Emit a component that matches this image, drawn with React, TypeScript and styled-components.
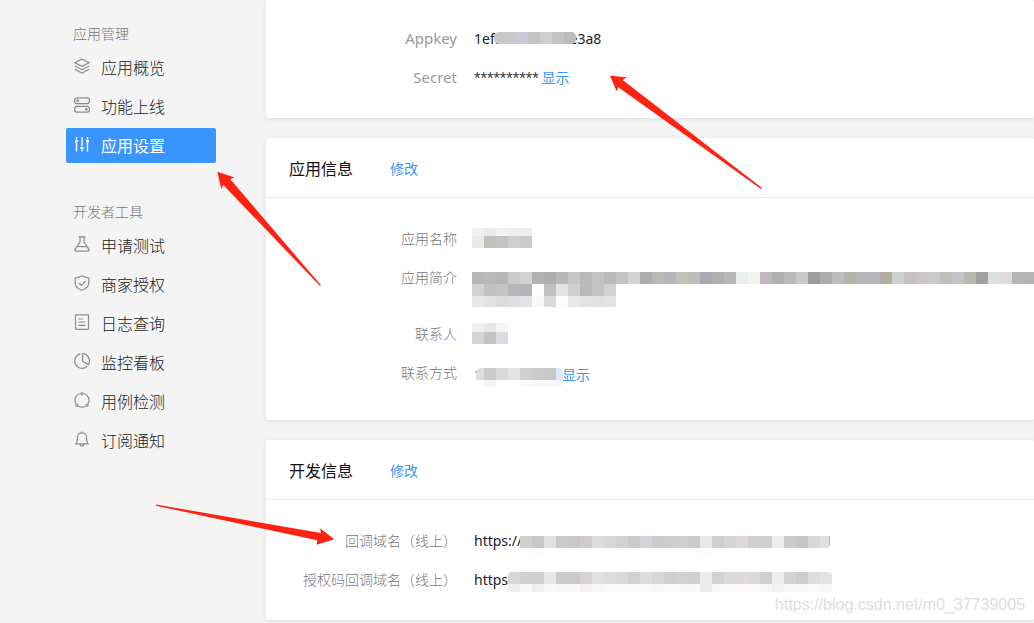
import React from 'react';
import styled, { createGlobalStyle } from 'styled-components';

const GlobalStyle = createGlobalStyle`
  *, *::before, *::after { box-sizing: border-box; }
  body {
    margin: 0;
    background: #f4f4f4;
    color: #222;
    font-family: "Noto Sans", "Noto Sans CJK SC", sans-serif;
    font-size: 14px;
  }
`;

const Page = styled.div`
  position: relative;
  display: flex;
  min-height: 100vh;
  overflow: hidden;
`;

const Sidebar = styled.nav`
  flex: none;
  width: 266px;
  padding: 24px 50px 0 66px;
`;

const NavGroup = styled.section`
  margin-bottom: 39px;
`;

const NavTitle = styled.h2`
  margin: 0 0 6px;
  padding-left: 7px;
  font-size: 14px;
  font-weight: 300;
  line-height: 20px;
  color: #777;
`;

const NavList = styled.ul`
  display: flex;
  flex-direction: column;
  gap: 4px;
  margin: 0;
  padding: 0;
  list-style: none;
`;

const NavLink = styled.a<{ $active?: boolean }>`
  display: flex;
  gap: 11px;
  height: 35px;
  padding: 8px 8px 0;
  border-radius: 2px;
  font-family: "Noto Sans CJK SC", sans-serif;
  font-size: 16px;
  font-weight: ${(p) => (p.$active ? 400 : 300)};
  line-height: 18px;
  text-decoration: none;
  color: ${(p) => (p.$active ? '#fff' : '#222')};
  background: ${(p) => (p.$active ? '#3a94ff' : 'transparent')};

  svg {
    flex: none;
    color: ${(p) => (p.$active ? '#fff' : '#8c8c8c')};
  }
`;

const Main = styled.main`
  flex: 1;
  min-width: 0;
  display: flex;
  flex-direction: column;
  gap: 20px;
`;

const Card = styled.section`
  background: #fff;
  border-radius: 2px;
  box-shadow: 0 1px 4px rgba(0, 0, 0, 0.1);
`;

const CardHeader = styled.header`
  display: flex;
  align-items: center;
  gap: 37px;
  height: 60px;
  padding: 0 23px;
  border-bottom: 1px solid #e9e9e9;
`;

const CardTitle = styled.h3`
  margin: 0;
  font-family: "Noto Sans CJK SC", sans-serif;
  font-size: 16px;
  font-weight: 400;
  line-height: 24px;
  color: #111;
`;

const Fields = styled.dl<{ $top: number; $bottom: number }>`
  margin: 0;
  padding: ${(p) => p.$top}px 0 ${(p) => p.$bottom}px;
`;

const Field = styled.div<{ $tall?: boolean }>`
  display: flex;
  gap: 15px;
  height: ${(p) => (p.$tall ? 56 : 39)}px;
  line-height: 37px;
`;

const Label = styled.dt<{ $latin?: boolean }>`
  flex: none;
  width: 191px;
  text-align: right;
  font-size: ${(p) => (p.$latin ? 15 : 14)}px;
  font-weight: ${(p) => (p.$latin ? 400 : 300)};
  color: ${(p) => (p.$latin ? '#999' : '#777')};
`;

const Value = styled.dd<{ $low?: boolean }>`
  position: relative;
  flex: 1;
  min-width: 0;
  margin: 0;
  padding-left: 2px;
  line-height: ${(p) => (p.$low ? 41 : 37)}px;
  white-space: nowrap;
`;

const Stars = styled.span`
  margin-right: 3px;
  font-family: Roboto, sans-serif;
  font-size: 15px;
  color: #444;
`;

const ActionLink = styled.a<{ $indent?: number }>`
  margin-left: ${(p) => p.$indent ?? 0}px;
  font-family: "Noto Sans CJK SC", sans-serif;
  font-size: 14px;
  text-decoration: none;
  color: #3a94ff;
`;

const Tail = styled.span<{ $gap: number }>`
  margin-left: ${(p) => p.$gap}px;
`;

const MosaicLayer = styled.svg<{ $left: number; $top: number }>`
  position: absolute;
  left: ${(p) => p.$left}px;
  top: ${(p) => p.$top}px;
  display: block;
`;

const Arrows = styled.svg`
  position: absolute;
  left: 0;
  top: 0;
  pointer-events: none;
`;

const Watermark = styled.span`
  position: absolute;
  right: 9px;
  bottom: 8px;
  font-family: "Liberation Sans", sans-serif;
  font-size: 16px;
  line-height: 20px;
  color: #dedede;
`;

type MosaicRow = { height: number; cells: string };

/* Pixelated cover for private values: one row per string, one colour per 12px cell. */
function Mosaic({ left, top, rows, radius = 0, start = 0, end }: {
  left: number; top: number; rows: MosaicRow[]; radius?: number; start?: number; end?: number;
}) {
  const id = React.useId();
  const grid = rows.map((r) => r.cells.split(' '));
  const width = Math.max(...grid.map((g) => g.length)) * 12;
  const height = rows.reduce((sum, r) => sum + r.height, 0);
  let y = 0;
  return (
    <MosaicLayer $left={left} $top={top} width={width} height={height} shapeRendering="crispEdges" aria-hidden="true">
      <clipPath id={id}>
        <rect x={start} y={0} width={(end ?? width) - start} height={height} rx={radius} />
      </clipPath>
      <g clipPath={`url(#${id})`}>
        {rows.map((row, r) => {
          const rowY = y;
          y += row.height;
          return grid[r].map((c, i) =>
            c === '-' ? null : <rect key={`${r}-${i}`} x={i * 12} y={rowY} width={12} height={row.height} fill={`#${c}`} />
          );
        })}
      </g>
    </MosaicLayer>
  );
}

const appkeyRows = [{ height: 12, cells: 'c6c6c5 c8c8c8 c8c9d3 c3c3c1 cfcfd1 c5c4c3 bcbbbb d5d5d6' }];
const nameRows = [
  { height: 8, cells: 'f1f0f0 ebe9ea f0f1f3 efeeee efeeee' },
  { height: 12, cells: 'eae9e8 c1c0bb c0c4c6 d1cdcc c9cad0' },
];
const introRows = [
  {
    height: 12,
    cells:
      'b9b6b6 bbb8b9 b3b8b7 cbc9cb d2d3d0 aeb3b5 adaeaf b9b8b8 c5c7c6 b7bab7 c2c3c3 babbb9 c1c5c7 d5d3d1 ' +
      'adadab b9b9b8 b3b5ba bfc3bb bebfbd a9a9b3 b0b0ae b9b7b8 e9eeee f3f4f0 bfb9bf afafad b8babb c8c8c6 ' +
      '9d9d9c adacad bdbdbd b4b4ae b9b7b8 b7b6be b3aca2 cdd1d3 c5c1c2 cbc6c3 c8cbcb c1bfbe c2c6ca b9b9b4 ' +
      'a19f9f dde0e2 dddcd8 b5b5b5 b6b3b7',
  },
  { height: 12, cells: 'd2d2d3 c0c2bf c3c5c4 b8b7b8 b1b6b8 fefefd c4bfbf e2e4e7 d2d0cf bab9be c4c4c4 cfd3d4' },
  { height: 11, cells: 'e7e7e5 e1e3e2 dddbdd dddee1 e2e4e4 f9f9f9 dad8d9 fafcfe e9e8e7 e4e4e4 e0e2e1 e3e5e5' },
];
const contactRows = [
  { height: 9, cells: 'f0f0f0 e6e6e6 f3f4f6' },
  { height: 12, cells: 'd5d5d4 c3c2c2 d9dde1' },
];
const phoneRows = [
  { height: 12, cells: 'deddd9 c7c9cb d8d9d9 e2e4e3 cfcfd1 cbc9ca c8c8c9 dce8fe' },
  { height: 7, cells: '- f5f5f5 - - fafafb f7f8fa f8f8f8 f5f8fe' },
];
const callbackRows = [
  {
    height: 12,
    cells:
      'd0d1cf c8c7c7 dfe1e5 cdcacc c6c8c5 d3cbc9 dadddd d7d7d6 d2d2cf c9c9c7 d4d5da cccccb cbcecd cecfcc c8cacd ' +
      'e8e8e6 d0cecd d5d7d5 dfdad8 cecfd2 d0cfce ececec cbcbcc c6c6c6 d6d7da dfe1e1',
  },
  { height: 7, cells: '- fcfcfc - - - - - - - - - - - - - fcfcfc' },
];
const authRows = [
  {
    height: 12,
    cells:
      'd7d8d6 d0d1d0 d4cfcf e4e8e9 cdcacc c9cbc8 d8d3d1 dee2e2 dedddb d9d9d9 d2d2d0 dcdde0 d9d7d6 ced0cf d1d2d1 d0d0d3 ' +
      'ecebea d3d2d0 dadcdb dfdad8 d7d9dc d0cfce eeeeee d3d3d3 cdcdcb dcdde0 e2e4e4',
  },
  {
    height: 8,
    cells:
      'ededee f9f9f9 efefef f8f8f8 f6f6f7 f8f8f8 f1f1f1 f6f6f6 fafafa fafaf8 fafafa fafafa f6f6f6 fafafa f9f9f9 f9f9f9 ' +
      'ecebea f9f9f9 fafafa fafafa fafafa f7f7f7 f1f1f1 f8f8f8 f7f9f8 fafafa f8f8f8',
  },
];

const icons: Record<string, React.ReactNode> = {
  layers: (
    <>
      <path d="M8 1 15.2 4.7 8 8.4.8 4.7Z" />
      <path d="M.8 8 8 11.7 15.2 8" />
      <path d="M.8 11.3 8 15l7.2-3.7" />
    </>
  ),
  toggles: (
    <>
      <rect x=".6" y=".8" width="14.8" height="5.8" rx="2.4" />
      <rect x=".6" y="9.4" width="14.8" height="5.8" rx="2.4" />
      <circle cx="3.7" cy="3.7" r=".8" fill="currentColor" />
      <circle cx="12.3" cy="12.3" r=".8" fill="currentColor" />
    </>
  ),
  sliders: (
    <>
      <path d="M2.5 1v2.500M2.500 7v8.500M8 1v9M8 13.500v2M13.500 1v2.500M13.500 7v8.500" strokeWidth="1.4" />
      <path d="M1 5.300h3M6.500 12h3M12 5.300h3" strokeWidth="2.6" />
    </>
  ),
  flask: (
    <>
      <path d="M4.600.9h6.800M6 1v5L.9 13.600q-.5 1.600 1 1.600h12.200q1.500 0 1-1.600L10 6V1" />
      <path d="M3.600 10.600h8.800" />
    </>
  ),
  shield: (
    <>
      <path d="M8 .8Q4.700 3 1.200 3v4.600C1.200 11.500 4 14 8 15.300c4-1.300 6.800-3.800 6.800-7.700V3Q11.300 3 8 .8Z" />
      <path d="m4.800 7.800 2.500 2.500 4.300-4.300" />
    </>
  ),
  log: (
    <>
      <rect x="1.500" y=".8" width="13" height="14.500" rx=".5" />
      <path d="M4.300 5h4.500M4.300 8h7M4.300 11.300h7" />
    </>
  ),
  pie: (
    <>
      <path d="M8.600.700A7.400 7.400 0 0 1 14.400 11.800L8.600 8.300Z" />
      <path d="M6.400.9A7.300 7.300 0 1 0 13.200 13.200" />
    </>
  ),
  cycle: (
    <>
      <path d="M5.700 1.500A7 7 0 0 0 2 11.700M10.300 1.500A7 7 0 0 1 14 11.700M4.500 14.200a7 7 0 0 0 7 0" />
      <circle cx="8" cy="1.700" r="1.100" />
      <circle cx="3" cy="13.200" r="1.100" />
      <circle cx="13" cy="13.200" r="1.100" />
    </>
  ),
  bell: (
    <>
      <path d="M8 .4v1.400M1.800 12.800h12.400Q12.600 11 12.600 8.600V6.500C12.600 3.500 10.600 1.900 8 1.900S3.400 3.500 3.400 6.500v2.100Q3.400 11 1.800 12.800Z" />
      <path d="M6 13.200q.3 1.900 2 1.900t2-1.900" />
    </>
  ),
};

function Icon({ name }: { name: string }) {
  return (
    <svg width="16" height="16" viewBox="0 0 16 16" fill="none" stroke="currentColor" strokeWidth="1.2" aria-hidden="true">
      {icons[name]}
    </svg>
  );
}

const groups = [
  {
    title: '应用管理',
    items: [
      { icon: 'layers', text: '应用概览' },
      { icon: 'toggles', text: '功能上线' },
      { icon: 'sliders', text: '应用设置', active: true },
    ],
  },
  {
    title: '开发者工具',
    items: [
      { icon: 'flask', text: '申请测试' },
      { icon: 'shield', text: '商家授权' },
      { icon: 'log', text: '日志查询' },
      { icon: 'pie', text: '监控看板' },
      { icon: 'cycle', text: '用例检测' },
      { icon: 'bell', text: '订阅通知' },
    ],
  },
];

export default function App() {
  return (
    <>
      <GlobalStyle />
      <Page>
        <Sidebar>
          {groups.map((group) => (
            <NavGroup key={group.title}>
              <NavTitle>{group.title}</NavTitle>
              <NavList>
                {group.items.map((item) => (
                  <li key={item.text}>
                    <NavLink href="#" $active={'active' in item}>
                      <Icon name={item.icon} />
                      {item.text}
                    </NavLink>
                  </li>
                ))}
              </NavList>
            </NavGroup>
          ))}
        </Sidebar>

        <Main>
          <Card>
            <Fields $top={20} $bottom={20}>
              <Field>
                <Label $latin>Appkey</Label>
                <Value>
                  1eff<Tail $gap={70}>e3a8</Tail>
                  <Mosaic left={20} top={12} rows={appkeyRows} radius={5} start={2} end={84} />
                </Value>
              </Field>
              <Field>
                <Label $latin>Secret</Label>
                <Value>
                  <Stars>**********</Stars>
                  <ActionLink href="#">显示</ActionLink>
                </Value>
              </Field>
            </Fields>
          </Card>

          <Card>
            <CardHeader>
              <CardTitle>应用信息</CardTitle>
              <ActionLink href="#">修改</ActionLink>
            </CardHeader>
            <Fields $top={22} $bottom={27}>
              <Field>
                <Label>应用名称</Label>
                <Value><Mosaic left={0} top={8} rows={nameRows} /></Value>
              </Field>
              <Field $tall>
                <Label>应用简介</Label>
                <Value><Mosaic left={0} top={13} rows={introRows} /></Value>
              </Field>
              <Field>
                <Label>联系人</Label>
                <Value><Mosaic left={0} top={8} rows={contactRows} /></Value>
              </Field>
              <Field>
                <Label>联系方式</Label>
                <Value $low>
                  1<ActionLink href="#" $indent={80}>显示</ActionLink>
                  <Mosaic left={0} top={14} rows={phoneRows} radius={5} start={4} end={91} />
                </Value>
              </Field>
            </Fields>
          </Card>

          <Card>
            <CardHeader>
              <CardTitle>开发信息</CardTitle>
              <ActionLink href="#">修改</ActionLink>
            </CardHeader>
            <Fields $top={22} $bottom={20}>
              <Field>
                <Label>回调域名（线上）</Label>
                <Value>
                  https://<Tail $gap={302}>1</Tail>
                  <Mosaic left={48} top={14} rows={callbackRows} end={309} />
                </Value>
              </Field>
              <Field>
                <Label>授权码回调域名（线上）</Label>
                <Value>
                  https
                  <Mosaic left={36} top={11} rows={authRows} radius={4} />
                </Value>
              </Field>
            </Fields>
          </Card>
        </Main>

        <Watermark>https://blog.csdn.net/m0_37739005</Watermark>
        <Arrows width="780" height="560" viewBox="0 0 780 560" fill="#ff2213" aria-hidden="true">
          <path d="M610 75.700 627 77.300 622.700 80 762 188 761 189 618.300 87.300 616.700 91.300Z" />
          <path d="M217.300 171.700 234 177.300 230.300 179.300 321 285.300 320 286 223.300 185 221.300 189Z" />
          <path d="M334.300 539.300 320 528.300 321 533 156 504.500 156 505.700 317.300 540.300 316.700 544.700Z" />
        </Arrows>
      </Page>
    </>
  );
}
